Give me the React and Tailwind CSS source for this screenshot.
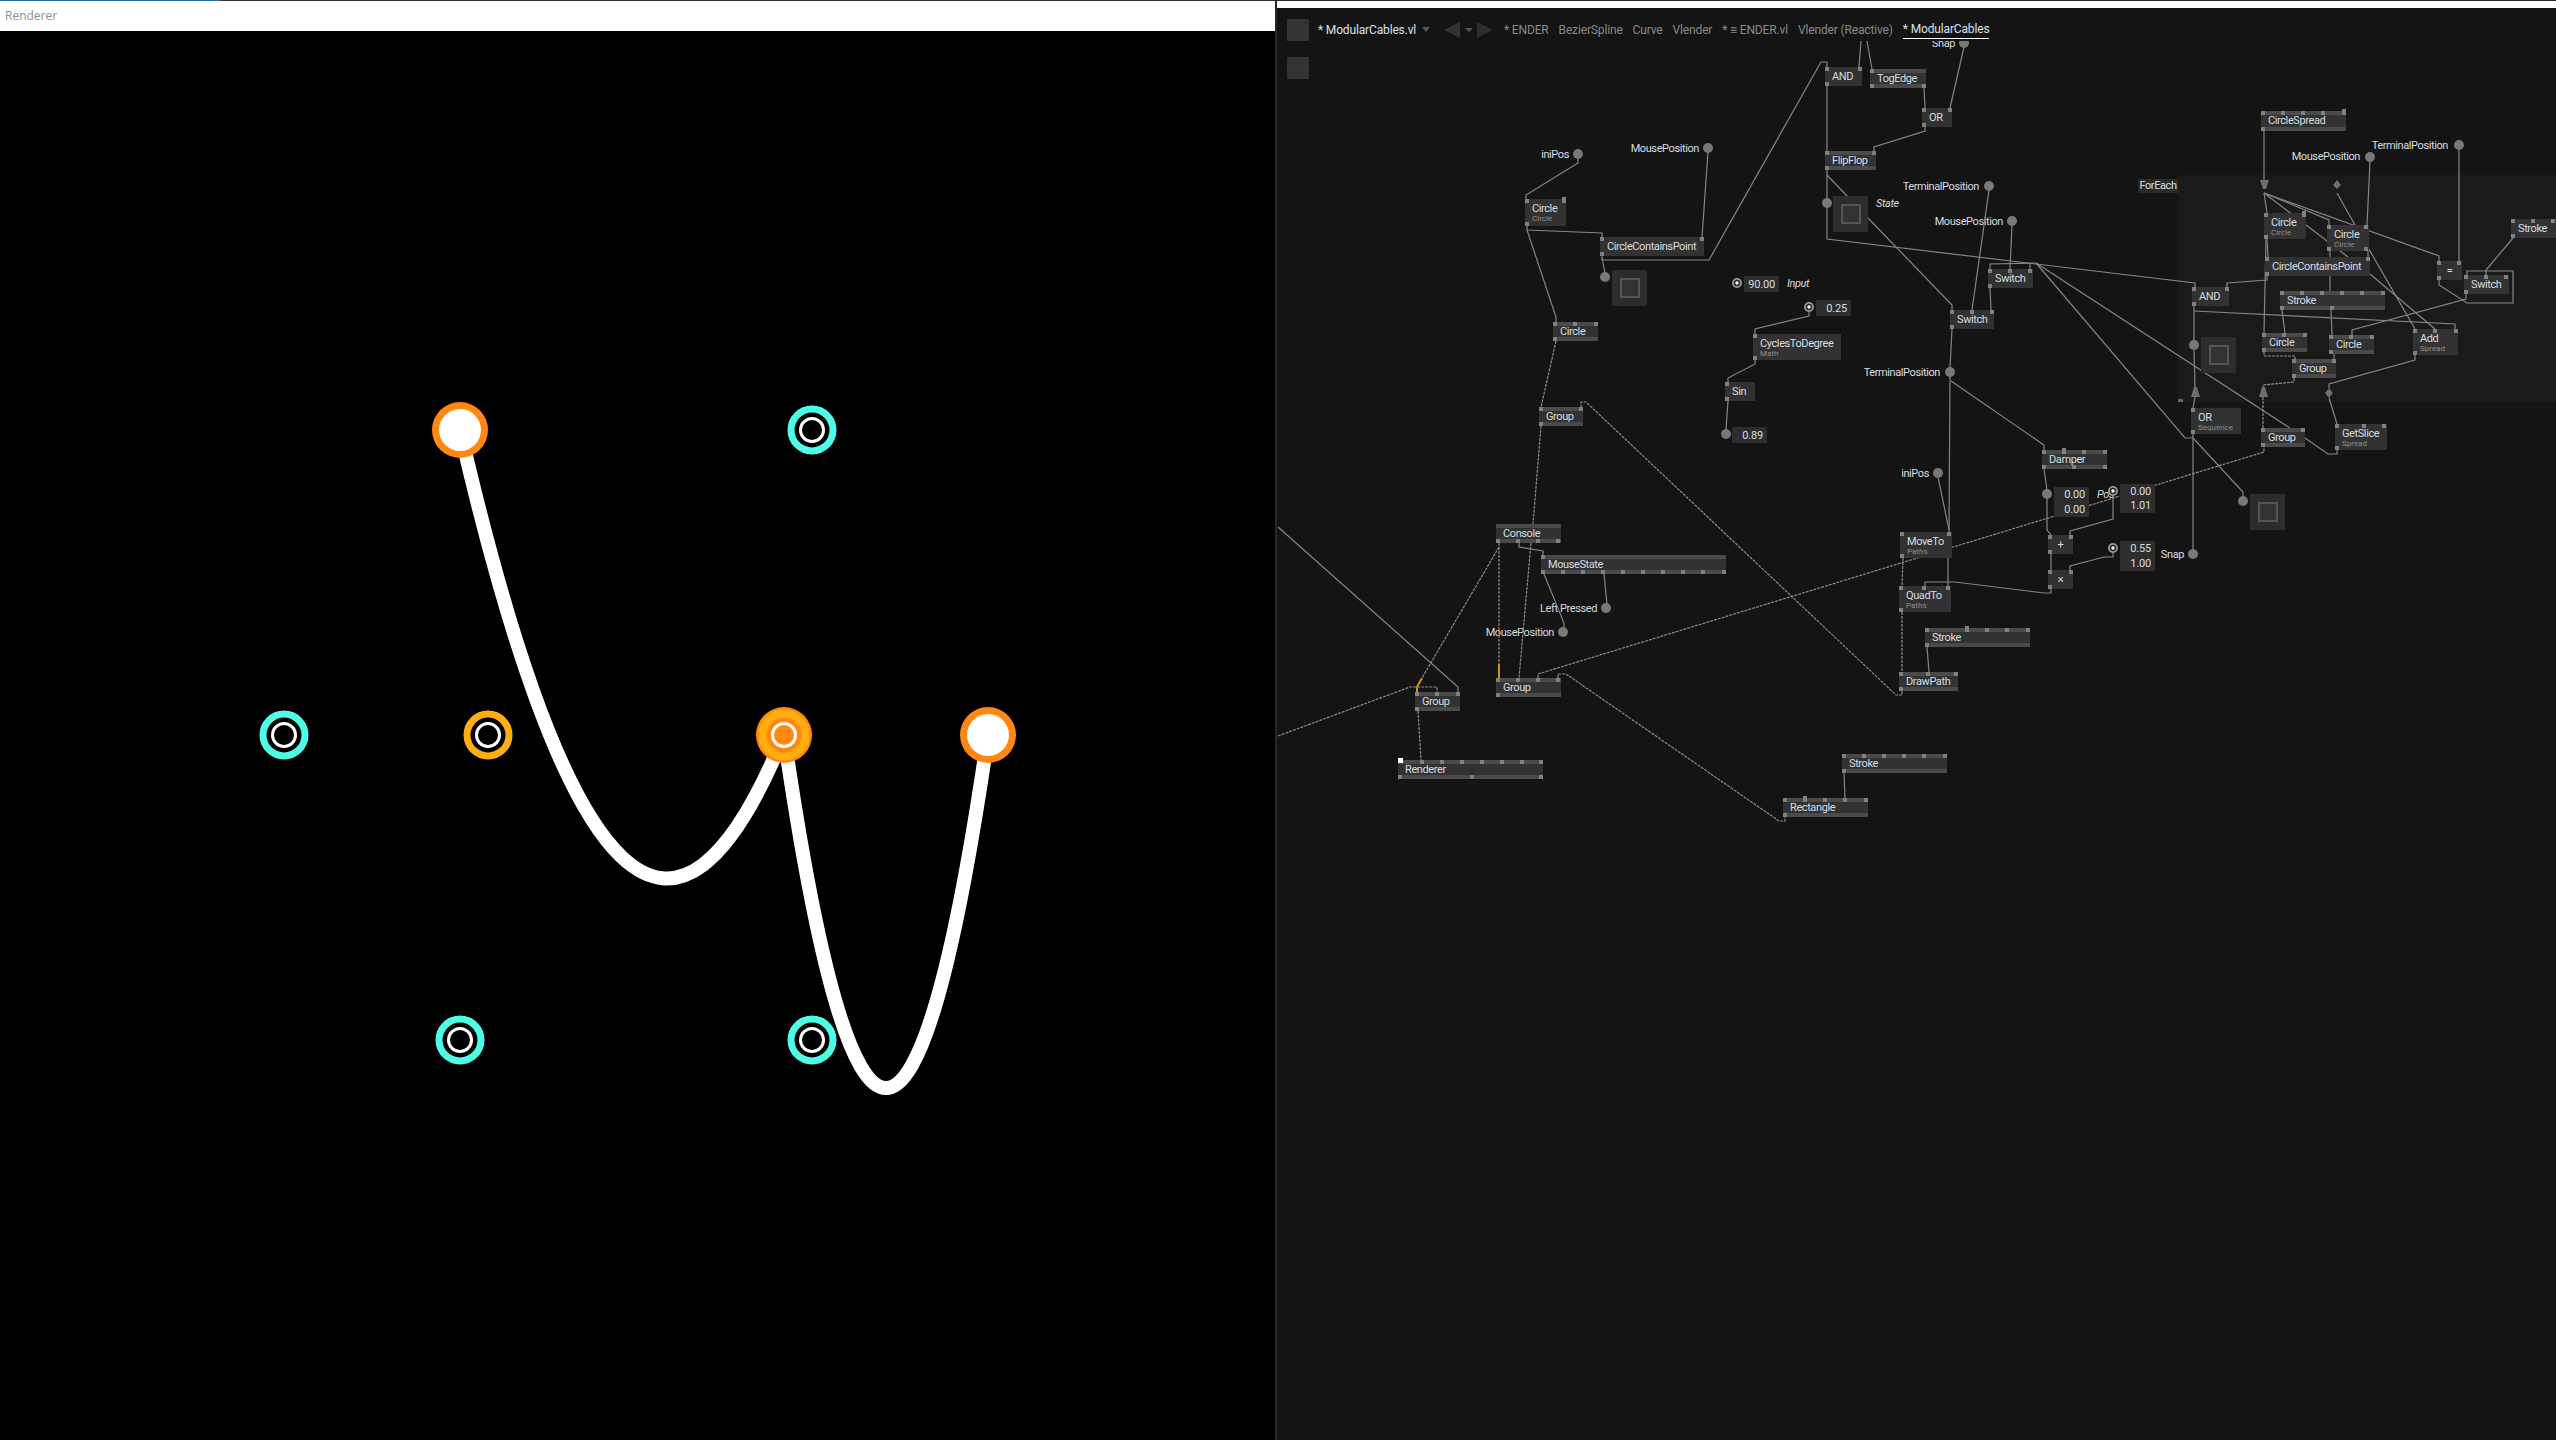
import React from "react"

const OX = 1277
const OY = 41

// canvas nodes, in screenshot coordinates
const nodes = [
  { l: "AND", x: 1825, y: 67, w: 37, h: 19, top: [0, 33], bot: [0] },
  { l: "TogEdge", x: 1870, y: 69, w: 56, h: 19, bar: 1, top: [0], bot: [0, 52] },
  { l: "OR", x: 1922, y: 108, w: 30, h: 19, top: [0, 26], bot: [0] },
  { l: "FlipFlop", x: 1825, y: 151, w: 51, h: 19, bar: 1, top: [0, 47], bot: [0] },
  { l: "Circle", s: "Circle", x: 1525, y: 199, w: 41, h: 27, top: [0], tall: [37], bot: [0] },
  { l: "CircleContainsPoint", x: 1600, y: 237, w: 104, h: 19, top: [0, 100], bot: [0] },
  { l: "Circle", x: 1553, y: 322, w: 45, h: 19, bar: 1, top: [0, 20, 41], bot: [0] },
  { l: "CyclesToDegree", s: "Math", x: 1753, y: 334, w: 88, h: 26, top: [0], bot: [0] },
  { l: "Sin", x: 1725, y: 382, w: 30, h: 19, top: [0], bot: [0] },
  { l: "Group", x: 1539, y: 407, w: 44, h: 19, bar: 1, top: [0, 40], bot: [0] },
  { l: "Switch", x: 1988, y: 269, w: 45, h: 19, top: [0, 20, 40], bot: [0] },
  { l: "Switch", x: 1950, y: 310, w: 44, h: 19, top: [0, 20, 40], bot: [0] },
  { l: "Console", x: 1496, y: 524, w: 65, h: 19, bar: 1, top: [], bot: [0, 20, 40, 60] },
  { l: "MouseState", x: 1541, y: 555, w: 185, h: 19, bar: 1, top: [0], bot: [0, 20, 40, 60, 80, 100, 120, 140, 160, 181] },
  { l: "Group", x: 1496, y: 678, w: 65, h: 19, bar: 1, top: [0, 20, 40, 60], bot: [0] },
  { l: "Group", x: 1415, y: 692, w: 45, h: 19, bar: 1, top: [0, 20, 41], bot: [0] },
  { l: "Renderer", x: 1398, y: 760, w: 145, h: 19, bar: 1, top: [22, 42, 62, 82, 102, 122, 141], bot: [0, 72, 141] },
  { l: "Stroke", x: 1842, y: 754, w: 105, h: 19, bar: 1, top: [0, 20, 40, 60, 80, 101], bot: [0] },
  { l: "Rectangle", x: 1783, y: 798, w: 85, h: 19, bar: 1, top: [0, 40, 60, 81], tall: [20], bot: [0] },
  { l: "MoveTo", s: "Paths", x: 1900, y: 532, w: 52, h: 26, top: [0, 47], bot: [0] },
  { l: "QuadTo", s: "Paths", x: 1899, y: 586, w: 52, h: 26, top: [0, 23, 47], bot: [0] },
  { l: "Stroke", x: 1925, y: 628, w: 105, h: 19, bar: 1, top: [0, 60, 80, 101], tall: [40], bot: [0] },
  { l: "DrawPath", x: 1899, y: 672, w: 59, h: 19, bar: 1, top: [0, 27, 55], bot: [0] },
  { l: "Damper", x: 2042, y: 450, w: 65, h: 19, bar: 1, top: [0, 40, 61], tall: [20], bot: [0, 30, 61] },
  { l: "+", x: 2048, y: 535, w: 25, h: 19, top: [0, 21], bot: [0], c: 1 },
  { l: "×", x: 2048, y: 570, w: 25, h: 19, top: [0, 21], bot: [0], c: 1 },
  { l: "OR", s: "Sequence", x: 2191, y: 408, w: 50, h: 26, top: [0], bot: [0] },
  { l: "Group", x: 2261, y: 428, w: 44, h: 19, bar: 1, top: [0, 40], bot: [0] },
  { l: "CircleSpread", x: 2261, y: 111, w: 85, h: 20, bar: 1, top: [0, 20, 40, 60], tall: [81], bot: [0] },
  { l: "Circle", s: "Circle", x: 2264, y: 213, w: 42, h: 26, top: [0], tall: [38], bot: [0] },
  { l: "Circle", s: "Circle", x: 2327, y: 225, w: 42, h: 26, top: [0, 37], bot: [0, 37] },
  { l: "CircleContainsPoint", x: 2265, y: 257, w: 105, h: 19, top: [0, 101], bot: [0] },
  { l: "=", x: 2437, y: 261, w: 25, h: 19, top: [0, 20], bot: [0], c: 1 },
  { l: "Switch", x: 2464, y: 275, w: 45, h: 19, top: [0, 20, 40], bot: [0] },
  { l: "Stroke", x: 2511, y: 219, w: 45, h: 19, top: [0, 20, 40], bot: [0] },
  { l: "AND", x: 2192, y: 287, w: 37, h: 19, top: [0, 33], bot: [0] },
  { l: "Stroke", x: 2280, y: 291, w: 105, h: 19, bar: 1, top: [0, 20, 40, 60, 80, 101], bot: [0, 50] },
  { l: "Circle", x: 2262, y: 333, w: 45, h: 19, bar: 1, top: [0, 20, 41], bot: [0] },
  { l: "Circle", x: 2329, y: 335, w: 45, h: 19, bar: 1, top: [0, 20, 41], bot: [0] },
  { l: "Add", s: "Spread", x: 2413, y: 329, w: 45, h: 26, top: [0, 20, 41], bot: [0] },
  { l: "Group", x: 2292, y: 359, w: 44, h: 19, bar: 1, top: [0, 40], bot: [0] },
  { l: "GetSlice", s: "Spread", x: 2335, y: 424, w: 52, h: 26, top: [0, 27, 47], bot: [0] },
]

const labels = [
  { t: "Snap", x: 1955, y: 43 },
  { t: "iniPos", x: 1569, y: 154 },
  { t: "MousePosition", x: 1699, y: 148 },
  { t: "TerminalPosition", x: 1979, y: 186 },
  { t: "MousePosition", x: 2003, y: 221 },
  { t: "TerminalPosition", x: 1940, y: 372 },
  { t: "Left Pressed", x: 1597, y: 608 },
  { t: "MousePosition", x: 1554, y: 632 },
  { t: "iniPos", x: 1929, y: 473 },
  { t: "Snap", x: 2184, y: 554 },
  { t: "TerminalPosition", x: 2448, y: 145 },
  { t: "MousePosition", x: 2360, y: 156 },
]

const notes = [
  { t: "State", x: 1876, y: 203 },
  { t: "Input", x: 1787, y: 283 },
  { t: "Pos", x: 2097, y: 494 },
]

const pads = [
  [1964, 43], [1578, 154], [1708, 148], [1989, 186], [2012, 221], [1950, 372], [1606, 608], [1563, 632],
  [1938, 473], [2193, 554], [2459, 145], [2370, 157], [1605, 277], [1827, 203], [1726, 434], [2047, 494],
  [2243, 501], [2194, 345],
]

const ringPads = [[1737, 283], [1809, 307], [2113, 491], [2113, 548]]

const values = [
  { v: ["90.00"], x: 1744, y: 276, h: 16 },
  { v: ["0.25"], x: 1816, y: 300, h: 16 },
  { v: ["0.89"], x: 1732, y: 427, h: 16 },
  { v: ["0.00", "0.00"], x: 2054, y: 487, h: 30 },
  { v: ["0.00", "1.01"], x: 2120, y: 484, h: 29 },
  { v: ["0.55", "1.00"], x: 2120, y: 541, h: 30 },
]

const toggles = [[1612, 270], [1833, 196], [2250, 494], [2201, 337]]

const wires = [
  [1578, 158, 1578, 163, 1526, 195, 1526, 199],
  [1527, 226, 1527, 230, 1602, 233, 1602, 237],
  [1708, 152, 1702, 237],
  [1602, 256, 1602, 260, 1709, 260, 1821, 62, 1827, 62, 1827, 67],
  [1527, 230, 1556, 317, 1556, 322],
  [1809, 311, 1809, 316, 1755, 329, 1755, 334],
  [1755, 360, 1755, 364, 1728, 378, 1728, 382],
  [1728, 401, 1726, 430],
  [1859, 67, 1861, 41],
  [1872, 69, 1867, 41],
  [1924, 88, 1925, 108],
  [1964, 47, 1950, 108],
  [1827, 86, 1827, 151],
  [1925, 127, 1925, 131, 1874, 147, 1874, 151],
  [1827, 170, 1827, 239, 2195, 283, 2195, 287],
  [1827, 175, 1848, 197],
  [1868, 218, 1952, 305, 1952, 310],
  [1989, 190, 1972, 310],
  [2012, 225, 2010, 269],
  [1990, 269, 1990, 264, 2036, 263],
  [2030, 269, 2030, 264],
  [1990, 288, 1991, 310],
  [2036, 263, 2185, 438, 2193, 438],
  [2036, 263, 2290, 428],
  [2305, 438, 2328, 454, 2337, 454, 2337, 450],
  [1952, 329, 1950, 368],
  [1950, 376, 1949, 532],
  [1948, 558, 1948, 586],
  [1951, 381, 2044, 445, 2044, 450],
  [1938, 477, 1949, 530],
  [2044, 469, 2047, 490],
  [2047, 498, 2047, 530, 2051, 535],
  [2051, 554, 2051, 570],
  [2051, 589, 2051, 593, 2044, 593, 1955, 582, 1925, 582, 1925, 586],
  [2070, 535, 2070, 531, 2113, 519, 2113, 495],
  [2070, 570, 2070, 566, 2104, 557, 2113, 557, 2113, 552],
  [1927, 647, 1929, 672],
  [1602, 258, 1605, 273],
  [1844, 773, 1845, 798],
  [1544, 574, 1564, 623, 1564, 628],
  [1604, 574, 1607, 604],
  [1519, 543, 1519, 547, 1543, 551, 1543, 555],
  [1278, 527, 1458, 687, 1458, 692],
  [2264, 131, 2264, 180],
  [2264, 193, 2267, 213],
  [2264, 193, 2306, 225, 2348, 257],
  [2264, 193, 2329, 220, 2329, 225],
  [2264, 193, 2439, 256, 2439, 261],
  [2337, 193, 2355, 225, 2415, 329],
  [2370, 161, 2367, 225],
  [2459, 149, 2459, 261],
  [2267, 239, 2268, 257],
  [2330, 251, 2330, 257],
  [2368, 251, 2368, 257],
  [2267, 276, 2267, 280, 2227, 283, 2227, 287],
  [2266, 239, 2264, 333],
  [2330, 276, 2330, 291],
  [2370, 274, 2435, 329],
  [2282, 310, 2285, 333],
  [2331, 310, 2332, 335],
  [2194, 306, 2194, 340],
  [2194, 350, 2195, 387],
  [2194, 311, 2455, 324, 2455, 329],
  [2466, 294, 2466, 299, 2352, 330, 2352, 335],
  [2439, 280, 2439, 285, 2467, 303, 2513, 303, 2513, 271, 2467, 271, 2467, 275],
  [2513, 238, 2486, 270, 2486, 275],
  [2334, 354, 2334, 359],
  [2415, 355, 2415, 360, 2329, 384, 2329, 388],
  [2329, 398, 2337, 424],
  [2195, 397, 2193, 408],
  [2193, 434, 2193, 549],
  [2193, 438, 2243, 492, 2243, 497],
]

const dashed = [
  [1556, 341, 1541, 407],
  [1538, 678, 1538, 674, 2264, 452, 2264, 447],
  [1903, 558, 1902, 586],
  [1902, 612, 1902, 672],
  [1902, 691, 1902, 695, 1896, 695, 1586, 402, 1581, 402, 1581, 407],
  [1541, 426, 1533, 524],
  [1499, 543, 1499, 664],
  [1531, 543, 1519, 678],
  [1499, 547, 1422, 678],
  [1278, 736, 1410, 687, 1437, 687, 1437, 692],
  [1418, 711, 1421, 760],
  [1558, 678, 1558, 674, 1566, 674, 1779, 821, 1785, 821, 1785, 817],
  [2264, 352, 2264, 356, 2295, 356, 2295, 359],
  [2294, 378, 2294, 382, 2263, 385, 2263, 388],
  [2263, 397, 2263, 428],
]

const Node = ({ n }) => (
  <div
    className="absolute bg-[#323232] pl-[7px] pt-[3px] text-[#d5dde2] text-[11px] leading-[13px] tracking-[-0.4px]"
    style={{ left: n.x - OX, top: n.y - OY, width: n.w, height: n.h }}
  >
    {n.bar && <div className="absolute left-0 right-0 top-0 h-1 bg-[#4a4a4a]" />}
    {n.bar && <div className="absolute left-0 right-0 bottom-0 h-1 bg-[#4a4a4a]" />}
    {n.top.map((p) => (
      <div key={p} className="absolute top-0 w-1 h-1 bg-[#808080]" style={{ left: p }} />
    ))}
    {(n.tall || []).map((p) => (
      <div key={p} className="absolute -top-[2px] w-1 h-[6px] bg-[#808080]" style={{ left: p }} />
    ))}
    {n.bot.map((p) => (
      <div key={p} className="absolute bottom-0 w-1 h-1 bg-[#808080]" style={{ left: p }} />
    ))}
    <div className={n.c ? "relative text-center -ml-[7px]" : "relative whitespace-nowrap"}>{n.l}</div>
    {n.s && <div className="relative text-[8px] leading-[8px] tracking-normal text-[#8d8d8d]">{n.s}</div>}
  </div>
)

const Pt = (arr) => arr.join(" ")

const Canvas = () => (
  <div className="relative flex-1 overflow-hidden font-['Roboto',sans-serif]">
    <div className="absolute left-[901px] right-0 top-[134px] h-[227px] bg-[#1a1a1a]" />
    <div className="absolute left-[901px] top-[358px] w-[5px] h-[3px] bg-[#666]" />
    <div className="absolute left-[861px] top-[138px] w-[40px] h-[14px] bg-[#2a2a2a] text-[#d5dde2] text-[11px] leading-[14px] tracking-[-0.4px] text-center">
      ForEach
    </div>
    <div className="absolute left-[10px] top-[16px] w-[22px] h-[22px] bg-[#333]" />

    {labels.map((a) => (
      <div
        key={a.t + a.x}
        className="absolute -translate-x-full -translate-y-1/2 whitespace-nowrap text-[#d5dde2] text-[11px] leading-[13px] tracking-[-0.4px]"
        style={{ left: a.x - OX, top: a.y - OY }}
      >
        {a.t}
      </div>
    ))}
    {notes.map((a) => (
      <div
        key={a.t}
        className="absolute -translate-y-1/2 italic text-[#d5dde2] text-[11px] leading-[13px] tracking-[-0.4px]"
        style={{ left: a.x - OX, top: a.y - OY }}
      >
        {a.t}
      </div>
    ))}

    <svg className="absolute inset-0 w-full h-full" viewBox={`${OX} ${OY} 1279 1399`} fill="none">
      {wires.map((w, i) => (
        <polyline key={i} points={Pt(w)} stroke="#858585" strokeWidth="1.2" />
      ))}
      {dashed.map((w, i) => (
        <polyline key={i} points={Pt(w)} stroke="#8a8a8a" strokeWidth="1.2" strokeDasharray="3 1" />
      ))}
      <polyline points="1499,664 1499,678" stroke="#d4920f" strokeWidth="2" />
      <polyline points="1422,678 1417,687 1417,692" stroke="#d4920f" strokeWidth="2" />
      {pads.map(([x, y]) => (
        <circle key={x + "-" + y} cx={x} cy={y} r="5" fill="#787878" />
      ))}
      {ringPads.map(([x, y]) => (
        <g key={x + "-" + y}>
          <circle cx={x} cy={y} r="5" fill="#999" />
          <circle cx={x} cy={y} r="3.2" fill="#2a2a2a" />
          <circle cx={x} cy={y} r="1.7" fill="#fff" />
        </g>
      ))}
      <polygon points="2260,180 2269,180 2266,189 2263,189" fill="#6e6e6e" />
      <polygon points="2194,387 2197,387 2200,397 2191,397" fill="#6e6e6e" />
      <polygon points="2262,387 2265,387 2268,397 2259,397" fill="#6e6e6e" />
      <polygon points="2337,180 2341,185 2337,189 2333,185" fill="#6e6e6e" />
      <polygon points="2329,388 2333,393 2329,398 2325,393" fill="#6e6e6e" />
    </svg>

    {values.map((b) => (
      <div
        key={b.x + "-" + b.y}
        className="absolute w-[35px] bg-[#2e2e2e] pr-1 text-right text-[#d5dde2] text-[11px] tracking-[-0.2px] flex flex-col justify-around"
        style={{ left: b.x - OX, top: b.y - OY, height: b.h }}
      >
        {b.v.map((v, i) => (
          <div key={i} className="leading-[13px]">{v}</div>
        ))}
      </div>
    ))}

    {toggles.map(([x, y]) => (
      <div
        key={x}
        className="absolute w-[35px] h-[36px] bg-[#2d2d2d] flex items-center justify-center"
        style={{ left: x - OX, top: y - OY }}
      >
        <div className="w-5 h-5 border-2 border-[#555] bg-[#333]" />
      </div>
    ))}

    {nodes.map((n, i) => (
      <Node key={i} n={n} />
    ))}
    <div className="absolute left-[121px] top-[717px] w-[5px] h-[5px] bg-white" />
  </div>
)

const tabs = ["* ENDER", "BezierSpline", "Curve", "Vlender", "* ≡ ENDER.vl", "Vlender (Reactive)"]

const Header = () => (
  <div className="flex items-center h-[33px] pt-[10px] pl-[10px] font-['Roboto',sans-serif] text-[12px] tracking-[-0.15px] bg-[#141414] text-[#8a8a8a]">
    <div className="w-[22px] h-[22px] bg-[#333]" />
    <span className="ml-[9px] w-[100px] text-[#d9e2ea] whitespace-pre">* ModularCables.vl</span>
    <svg className="ml-[4px]" width="8" height="5" viewBox="0 0 8 5"><polygon points="0,0 8,0 4,5" fill="#555" /></svg>
    <svg className="ml-[14px]" width="50" height="16" viewBox="0 0 50 16">
      <polygon points="0,8 16,0 16,16" fill="#333" />
      <polygon points="21,6 29,6 25,10" fill="#555" />
      <polygon points="33,0 49,8 33,16" fill="#2d2d2d" />
    </svg>
    <div className="ml-[10px] flex items-center gap-[10px]">
      {tabs.map((t) => (
        <span key={t} className="whitespace-nowrap">{t}</span>
      ))}
      <span className="whitespace-nowrap text-[#d9e2ea] border-b border-white">* ModularCables</span>
    </div>
  </div>
)

const Ball = ({ x, y }) => (
  <>
    <circle cx={x} cy={y} r="28" fill="#ff8712" />
    <circle cx={x} cy={y} r="21" fill="#fff" />
  </>
)

const Ring = ({ x, y, color }) => (
  <>
    <circle cx={x} cy={y} r="21" fill="none" stroke={color} strokeWidth="7" />
    <circle cx={x} cy={y} r="11.5" fill="none" stroke="#fff" strokeWidth="3" />
  </>
)

const Renderer = () => (
  <div className="w-[1277px] flex flex-col border-r-2 border-[#26262e]">
    <div className="flex h-px">
      <div className="w-[220px] bg-[#2a6aad]" />
      <div className="flex-1 bg-[#333]" />
    </div>
    <div className="h-[30px] bg-white pl-[5px] flex items-center text-[12px] text-[#8f8f8f] font-['Open_Sans',sans-serif]">
      Renderer
    </div>
    <div className="flex-1 bg-black">
      <svg className="w-full h-full" viewBox="0 31 1275 1409" fill="none">
        <path d="M460 430 Q622 1132 784 735" stroke="#fff" strokeWidth="14" />
        <path d="M784 735 Q886 1441 988 735" stroke="#fff" strokeWidth="14" />
        <Ball x={460} y={430} />
        <Ball x={988} y={735} />
        <Ring x={812} y={430} color="#4dfde8" />
        <Ring x={284} y={735} color="#4dfde8" />
        <Ring x={488} y={735} color="#ffae12" />
        <Ring x={460} y={1040} color="#4dfde8" />
        <Ring x={812} y={1040} color="#4dfde8" />
        <circle cx={784} cy={735} r="28" fill="#ff8712" />
        <circle cx={784} cy={735} r="25.5" fill="#ffae12" />
        <circle cx={784} cy={735} r="17.5" fill="#ff8712" />
        <circle cx={784} cy={735} r="11.5" stroke="#fff" strokeWidth="3" />
      </svg>
    </div>
  </div>
)

const App = () => {
  return (
    <div className="w-[2556px] h-[1440px] flex overflow-hidden bg-black">
      <Renderer />
      <div className="flex-1 flex flex-col bg-[#141414]">
        <div className="h-px bg-[#26262e]" />
        <div className="h-[7px] bg-white" />
        <Header />
        <Canvas />
      </div>
    </div>
  )
}

export default App
